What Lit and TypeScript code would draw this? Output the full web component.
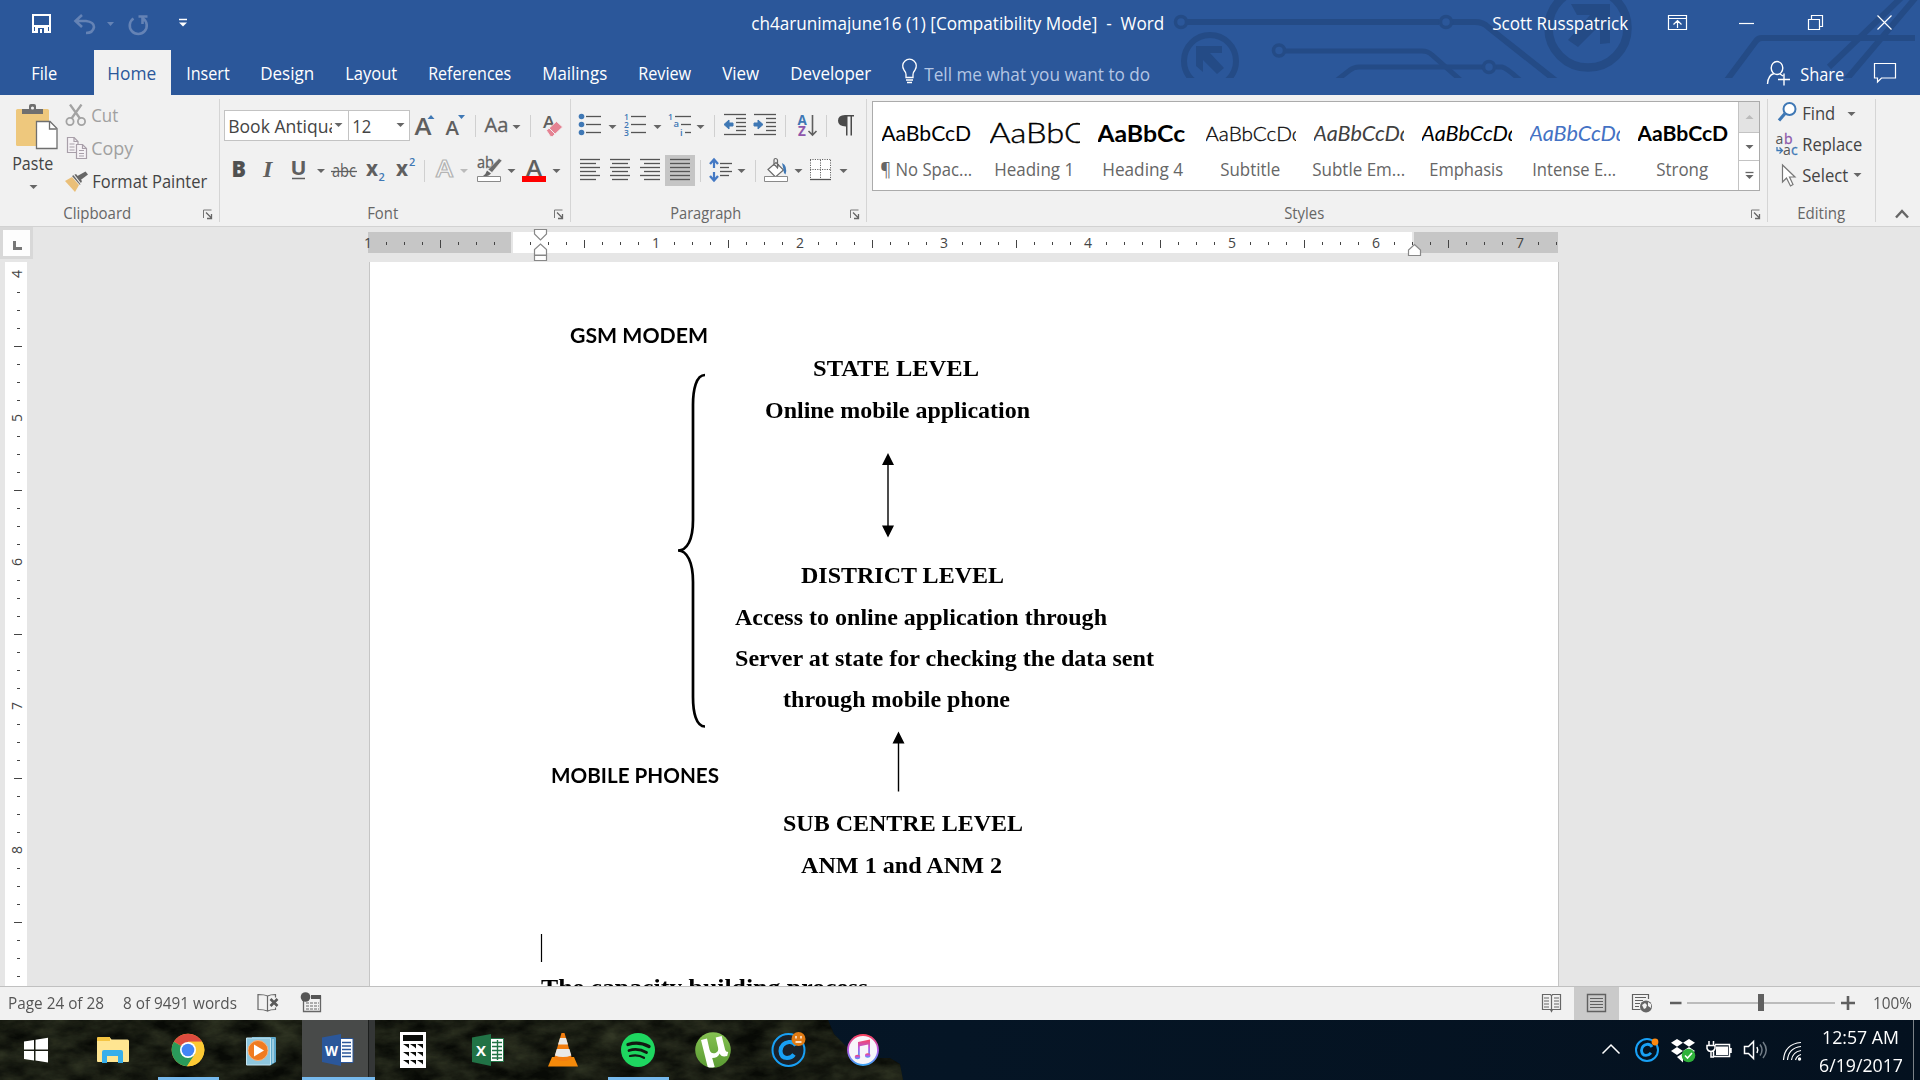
import { LitElement, html, svg, css } from "lit";
import { customElement, property, query } from "lit/decorators.js";

/** A line of text fitted to a given advance width. */
@customElement("ui-text")
class UiText extends LitElement {
  @property() text = "";
  @property({ type: Number }) w = 0;
  @query("span") span!: HTMLSpanElement;
  static styles = css`
    :host { display: inline-block; white-space: pre; flex: none; }
    span { display: inline-block; transform-origin: 0 50%; }
  `;
  render() {
    return html`<span>${this.text}</span>`;
  }
  updated() {
    this.span.style.transform = "none";
    const natural = this.span.getBoundingClientRect().width;
    if (natural && this.w) {
      this.style.width = `${this.w}px`;
      this.span.style.transform = `translateX(var(--nudge, 0px)) scaleX(${this.w / natural})`;
    }
  }
}

const t = (text: string, w: number, cls = "") => html`<ui-text class=${cls} .text=${text} .w=${w}></ui-text>`;

/** An icon cell whose drawing uses window coordinates. */
const cell = (x: number, y: number, w: number, h: number, body: unknown) =>
  html`<svg class="cell" width=${w} height=${h} viewBox="${x} ${y} ${w} ${h}">${body}</svg>`;

const r1 = (x: number, end: number, body: unknown) => cell(x, 104, end - x, 42, body);
const r2 = (x: number, end: number, body: unknown) => cell(x, 150, end - x, 42, body);

const caret = (x: number, y: number, fill = "#666") => svg`<path d="M${x} ${y}h8l-4 4z" fill=${fill} />`;
const sep = (x: number, y: number) => svg`<path d="M${x + 0.5} ${y}v22" stroke="#d0d0d0" />`;
const lines = (rows: number[][], stroke = "#555") =>
  rows.map(([x, y, w]) => svg`<path d="M${x} ${y + 0.5}h${w}" stroke=${stroke} stroke-width="1.3" />`);

const G = "#5f5f5f";
const B = "#3f78b5";

const TABS: [string, number][] = [
  ["Insert", 43.5], ["Design", 54], ["Layout", 52], ["References", 83],
  ["Mailings", 65], ["Review", 53], ["View", 37], ["Developer", 81],
];

const STYLES: [string, number, string, string, number][] = [
  ["AaBbCcD", 90, "s-normal", "¶ No Spac...", 92],
  ["AaBbCc", 112, "s-h1", "Heading 1", 80],
  ["AaBbCc", 88, "s-h4", "Heading 4", 81],
  ["AaBbCcDd", 98, "s-sub", "Subtitle", 60],
  ["AaBbCcDd", 98, "s-subtle", "Subtle Em...", 93],
  ["AaBbCcDd", 98, "s-emph", "Emphasis", 74],
  ["AaBbCcDd", 98, "s-intense", "Intense E...", 84],
  ["AaBbCcD", 91, "s-strong", "Strong", 52],
];

const DOC: [string, number, number][] = [
  ["STATE LEVEL", 443, 166],
  ["Online mobile application", 395, 265],
  ["", 0, 0], ["", 0, 0], ["", 0, 0],
  ["DISTRICT LEVEL", 431, 203],
  ["Access to online application through", 365, 372],
  ["Server at state for checking the data sent", 364.5, 419],
  ["through mobile phone", 413, 227],
  ["", 0, 0], ["", 0, 0],
  ["SUB CENTRE LEVEL", 413, 240],
  ["ANM 1 and ANM 2", 431, 201],
  ["", 0, 0], ["", 0, 0],
  ["The capacity building process", 171, 327],
];

@customElement("app-root")
class AppRoot extends LitElement {
  static styles = css`
    :host {
      display: flex; flex-direction: column; width: 1920px; height: 1080px; overflow: hidden;
      font-family: "Open Sans", "Noto Sans", sans-serif; font-size: 17.5px; color: #444; background: #e6e6e6;
    }
    * { box-sizing: border-box; }
    svg { display: block; flex: none; }
    svg text { font-family: "Open Sans", "Noto Sans", sans-serif; }
    .head { --nudge: -0.8px; position: relative; height: 95px; background: #2b579a; color: #fff; flex: none; }
    .decor { position: absolute; left: 0; top: 0; }
    .title { position: relative; display: grid; grid-template-columns: 752px 413px 328px 136px 1fr; height: 50px; align-items: center; }
    .title ui-text { line-height: 47px; height: 50px; }
    .tabs { position: relative; display: flex; height: 45px; line-height: 45px; font-size: 18.5px; }
    .tab { padding: 0 15.5px; }
    .tab.file { width: 94px; padding-left: 32px; flex: none; }
    .tab.home { width: 77px; padding: 0 0 0 14px; background: #f1f1f1; color: #2b579a; flex: none; }
    .tell { color: #b4c6e4; padding-top: 1px; }
    .share { padding-top: 1px; margin-right: 14px; }
    .grow { flex: 1; }
    .ribbon { --nudge: -0.8px; display: flex; height: 132px; background: #f1f1f1; border-bottom: 1px solid #d2d2d2; flex: none; }
    .group { display: flex; flex-direction: column; position: relative; border-right: 1px solid #d5d5d5; height: 123px; margin-top: 4px; padding-top: 5px; flex: none; }
    .g-clip { width: 220px; } .g-font { width: 351px; } .g-para { width: 296px; } .g-styles { width: 901px; } .g-edit { width: 108px; }
    .row { display: flex; height: 42px; }
    .row + .row { margin-top: 4px; }
    .label { display: flex; align-items: flex-start; height: 28px; margin-top: auto; margin-bottom: -2px; font-size: 16px; color: #666; }
    .label > div { flex: 1; text-align: center; line-height: 34px; }
    .clip { display: flex; height: 90px; }
    .paste { width: 62px; display: flex; flex-direction: column; align-items: flex-start; }
    .paste ui-text { margin-left: 12.5px; line-height: 22px; }
    .acts { display: flex; flex-direction: column; }
    .act { display: flex; height: 33px; line-height: 22px; }
    .off { color: #a0a0a0; }
    .combo { display: flex; height: 31px; margin-top: 6px; background: #fff; border: 1px solid #c3c3c3; line-height: 30px; overflow: hidden; font-size: 18px; }
    .c-font { width: 125px; margin-left: 4px; padding-left: 4px; }
    .c-size { width: 62px; padding-left: 4px; border-left: 1px solid #c3c3c3; margin-left: -1px; }
    .clipped { width: 103px; overflow: hidden; flex: none; }
    .gallery { display: flex; width: 888px; height: 90px; margin: -3px 0 0 5px; background: #fff; border: 1px solid #ababab; flex: none; }
    .style { width: 108px; padding-left: 9px; display: flex; flex-direction: column; flex: none; }
    .sample { width: 90px; height: 55px; overflow: hidden; color: #000; font-family: Lato, sans-serif; font-size: 20.5px; line-height: 62px; }
    .s-h1 { font-size: 28px; line-height: 60px; font-weight: 300; -webkit-text-stroke: 0.4px #000; }
    .s-h4 { font-weight: 700; font-size: 23.5px; }
    .s-sub { font-weight: 300; -webkit-text-stroke: 0.3px #111; }
    .s-subtle { font-style: italic; color: #404040; }
    .s-emph { font-style: italic; }
    .s-intense { font-style: italic; color: #4472c4; }
    .s-strong { font-weight: 700; }
    .sname { width: 90px; display: flex; justify-content: center; color: #666; line-height: 25px; font-size: 18px; }
    .scroll { margin-left: auto; }
    .edit { display: flex; flex-direction: column; padding-left: 6px; margin-top: -3px; }
    .erow { display: flex; height: 31px; line-height: 25px; }
    .work { display: flex; flex: none; height: 759px; }
    .side { width: 369px; flex: none; }
    .main { width: 1551px; display: flex; flex-direction: column; }
    .hruler { margin-left: -9px; }
    .page { position: relative; width: 1190px; height: 724px; background: #fff; border-left: 1px solid #c6c6c6; border-right: 1px solid #c6c6c6; overflow: hidden; padding-top: 86.2px; font-family: "Liberation Serif", serif; font-weight: 700; font-size: 24px; color: #000; flex: none; }
    .line { height: 41.4px; line-height: 41.4px; white-space: pre; display: flex; }
    .line:nth-child(16) { margin-top: -2.5px; }
    .indent { flex: none; }
    .shapes { position: absolute; left: 0; top: 0; }
    .box { position: absolute; font-family: Lato, sans-serif; font-size: 20.5px; line-height: 24px; }
    .gsm { left: 200px; top: 61px; }
    .phones { left: 181px; top: 501px; }
    .status { display: flex; height: 34px; background: #f1f1f1; border-top: 1px solid #c0c0c0; font-size: 15.5px; line-height: 33px; color: #555; padding-left: 8px; flex: none; }
    .status .words { margin-left: 19px; }
    .task { position: relative; height: 60px; background: #0a0d09; color: #fff; display: flex; flex: none; }
    .photo { position: absolute; left: 0; top: 0; }
    .apps { position: relative; }
    .traylayer { position: relative; margin-left: auto; }
    .clock { position: relative; width: 102px; display: flex; flex-direction: column; align-items: center; padding-top: 4px; line-height: 27.5px; font-size: 17.5px; padding-right: 3px; }
    .peek { position: relative; width: 7px; border-left: 1px solid #7b8288; }
  `;

  private decor() {
    return html`<svg class="decor" width="1920" height="78" viewBox="0 0 1920 78">
      <g fill="none" stroke="#244b86" stroke-width="5">
        <circle cx="1181" cy="22" r="5.5" stroke-width="3.5" />
        <path d="M1187 22H1439M1452 22H1475Q1483 22 1488 27L1560 84" stroke-width="6" />
        <circle cx="1446" cy="22" r="5.5" stroke-width="3.5" />
        <circle cx="1210" cy="61" r="26" stroke-width="6" />
        <circle cx="1279" cy="50.5" r="5.5" stroke-width="3.5" />
        <path d="M1285 51H1422Q1428 51 1432 55L1465 84" />
        <path d="M1332 84L1350 70Q1354 67 1359 67H1483M1496 67H1502Q1507 68 1522 82" />
        <circle cx="1489" cy="67" r="5.5" stroke-width="3.5" />
        <circle cx="1588" cy="28" r="39.5" stroke-width="8.5" />
        <path d="M1724 84L1756 41Q1758 38 1762 38H1915" stroke-width="6" />
        <path d="M1829 67L1903 -4M1846 80L1917 -4" stroke-width="6" />
      </g>
      <path d="M1196 46H1222V53H1210L1224 68 1217 74 1203 60V72L1196 66Z" fill="#244b86" />
      <path d="M1571 4H1610V43L1600 44V25L1578 47 1568 40 1590 15H1577Z" fill="#244b86" />
    </svg>`;
  }

  private head() {
    return html`<div class="head">
      ${this.decor()}
      <div class="title">
        ${cell(0, 0, 752, 50, svg`
          <path d="M33 15h17v17h-17zM33 26h17" fill="none" stroke="#fff" stroke-width="2" />
          <path d="M35 26h13v7h-13z" fill="#fff" /><path d="M38 28h6v5h-2v-4h-2v4h-2z" fill="#2b579a" />
          <g fill="none" stroke="#6583b5" stroke-width="2.6"><path d="M76 21H86Q94 22 94 27Q93 33 86 33M82 15L75.500 21 82 27" />
          <path d="M133.500 18.500A8.500 8.500 0 1 0 143 18.500M138.500 16.500H147.500M142.500 16V24" /></g>
          <path d="M107 22h7l-3.500 4z" fill="#6583b5" />
          <path d="M179 19.500h8" stroke="#fff" stroke-width="1.500" /><path d="M179 22.500h8l-4 4z" fill="#fff" />`)}
        ${t("ch4arunimajune16 (1) [Compatibility Mode]  -  Word", 413)}
        <div></div>
        ${t("Scott Russpatrick", 136)}
        ${cell(1629, 0, 291, 50, svg`<g fill="none" stroke="#fff" stroke-width="1.2">
          <path d="M1668.500 15.500h18v14h-18zM1668.500 18.500h18M1677.500 28v-7M1673.500 24.500l4-4 4 4" />
          <path d="M1739 23.500h15" /><path d="M1808.500 19.500h11v10h-11zM1811.500 19v-3.500h11v11h-3" />
          <path d="M1877.500 15.500l14 14M1891.500 15.500l-14 14" /></g>`)}
      </div>
      <div class="tabs">
        <div class="tab file">${t("File", 26)}</div>
        <div class="tab home">${t("Home", 49)}</div>
        ${TABS.map(([n, w]) => html`<div class="tab">${t(n, w)}</div>`)}
        ${cell(888, 50, 37, 45, svg`<path d="M906 77.500v-3q0-2-2-4.500a6.800 6.800 0 1 1 11 0q-2 2.500-2 4.500v3z" fill="none" stroke="#fff" stroke-width="1.300" /><path d="M906 80h7M907 82.500h5" stroke="#fff" stroke-width="1.500" />`)}
        ${t("Tell me what you want to do", 226, "tell")}
        <div class="grow"></div>
        ${cell(1760, 50, 41, 45, svg`<g fill="none" stroke="#fff" stroke-width="1.400"><ellipse cx="1777" cy="68" rx="5.800" ry="6.500" /><path d="M1767.500 84Q1768 75 1774 73.500M1780 74L1783 76M1778 79.500h12M1784 73.500v12" /></g>`)}
        ${t("Share", 44, "share")}
        ${cell(1859, 50, 61, 45, svg`<path d="M1874.500 63.500h21v14.500h-14l-4 4v-4h-3z" fill="none" stroke="#fff" stroke-width="1.200" />`)}
      </div>
    </div>`;
  }

  private launcher(x: number) {
    return cell(x, 196, 24, 28, svg`<path d="M${x + 8.5} 218v-8h8" fill="none" stroke="#777" /><path d="M${x + 11} 212.500l5 5M${x + 16.5} 214v4.500h-4.500" fill="none" stroke="#666" stroke-width="1.300" />`);
  }

  private clipboard() {
    return html`<div class="group g-clip">
      <div class="clip">
        <div class="paste">
          ${cell(0, 104, 62, 48, svg`<rect x="16" y="109" width="33" height="37" rx="1.500" fill="#eec87d" />
            <path d="M22 114v-5h7v-3q0-2 2-2h3q2 0 2 2v3h7v5z" fill="#6f6f6f" /><circle cx="32.500" cy="108" r="1.600" fill="#f1f1f1" />
            <path d="M36.500 121.500h13.500l7 7v20h-20.500z" fill="#fff" stroke="#6f6f6f" stroke-width="1.300" /><path d="M49.500 121.500v7.500h7" fill="none" stroke="#6f6f6f" stroke-width="1.300" />`)}
          ${t("Paste", 41)}
          ${cell(0, 174, 62, 20, caret(29.5, 185))}
        </div>
        <div class="acts">
          <div class="act off">${cell(62, 104, 30, 33, svg`<g fill="none" stroke="#a3a3a3" stroke-width="1.800"><circle cx="70" cy="121.500" r="3.600" /><circle cx="81.500" cy="121.500" r="3.600" /><path d="M70 104.500L80 118.500M81.500 104.500L71.500 118.500" stroke-width="2.300" /></g>`)}${t("Cut", 27)}</div>
          <div class="act off">${cell(62, 137, 30, 33, svg`<g fill="#f5f2f5" stroke="#a89fa9" stroke-width="1.200"><path d="M67.500 137.500h6.500l4 4v11h-10.500z" /><path d="M76.500 144.500h6l4 4v10h-10z" /><path d="M74 137.500v4h4M82.500 144.500v4h4M69.500 144h5M69.500 147h5M69.500 150h5M79 150.500h5M79 153.500h5M79 156h5" fill="none" /></g>`)}${t("Copy", 42)}</div>
          <div class="act">${cell(62, 170, 31, 24, svg`<path d="M65 181l7-4 7 8-4 7z" fill="#eabf78" /><path d="M72 176l4-2 6 7-2 4z" fill="#666" /><path d="M76.500 176.500l9-5 2.500 3-8 6z" fill="#666" /><path d="M74 175l7 9" stroke="#f1f1f1" stroke-width="1.200" />`)}${t("Format Painter", 115)}</div>
        </div>
      </div>
      <div class="label"><div>${t("Clipboard", 68)}</div>${this.launcher(195)}</div>
    </div>`;
  }

  private font() {
    return html`<div class="group g-font">
      <div class="row">
        <div class="combo c-font"><div class="clipped">${t("Book Antiqua", 110)}</div>${cell(332, 111, 15, 29, caret(334.500, 123))}</div>
        <div class="combo c-size">${t("12", 19)}${cell(372, 111, 37, 29, caret(396.500, 123))}</div>
        ${r1(410, 440, svg`<text x="414.500" y="135" font-size="23" font-weight="600" fill=${G} textLength="17" lengthAdjust="spacingAndGlyphs">A</text><path d="M427.500 119h7l-3.500-4z" fill=${B} />`)}
        ${r1(440, 470, svg`<text x="445.500" y="135" font-size="19" font-weight="600" fill=${G} textLength="13.500" lengthAdjust="spacingAndGlyphs">A</text><path d="M458 115h7l-3.500 4z" fill=${B} />`)}
        ${r1(470, 478, sep(475, 115))}
        ${r1(478, 525, svg`<text x="484.500" y="132" font-size="20" fill=${G} textLength="24" lengthAdjust="spacingAndGlyphs" stroke=${G} stroke-width=".3">Aa</text>${caret(512.500, 125)}`)}
        ${r1(525, 536, sep(530, 115))}
        ${r1(536, 568, svg`<text x="543" y="128" font-size="17" font-weight="600" fill=${G} textLength="12" lengthAdjust="spacingAndGlyphs">A</text><path d="M546.500 130.500l10-9 6 5.500-10 9.500h-2z" fill="#e58393" stroke="#f1f1f1" stroke-width=".8" /><path d="M549 128l6 6" stroke="#f1f1f1" />`)}
      </div>
      <div class="row">
        ${r2(220, 255, svg`<text x="231.500" y="177" font-size="22" font-weight="800" fill="#505050" textLength="14.500" lengthAdjust="spacingAndGlyphs">B</text>`)}
        ${r2(255, 284, svg`<text x="263" y="177" font-size="24" font-weight="700" font-style="italic" fill=${G} style="font-family:'Liberation Serif'">I</text>`)}
        ${r2(284, 328, svg`<text x="290.500" y="175" font-size="20" font-weight="700" fill=${G} textLength="16" lengthAdjust="spacingAndGlyphs">U</text><path d="M292 178.500h13" stroke=${G} stroke-width="1.500" />${caret(317, 169)}`)}
        ${r2(328, 362, svg`<text x="332" y="177" font-size="17.500" fill=${G} textLength="24" lengthAdjust="spacingAndGlyphs">abc</text><path d="M331 171.500h26" stroke=${G} stroke-width="1.300" />`)}
        ${r2(362, 392, svg`<text x="366" y="176" font-size="22" font-weight="700" fill=${G} textLength="12" lengthAdjust="spacingAndGlyphs">x</text><text x="378.500" y="181" font-size="11" font-weight="600" fill=${B}>2</text>`)}
        ${r2(392, 420, svg`<text x="396" y="176" font-size="22" font-weight="700" fill=${G} textLength="12" lengthAdjust="spacingAndGlyphs">x</text><text x="409" y="166" font-size="11" font-weight="600" fill=${B}>2</text>`)}
        ${r2(420, 430, sep(424, 160))}
        ${r2(430, 472, svg`<text x="436" y="177" font-size="23" font-weight="600" fill="#fafafa" stroke="#b4b4b4" stroke-width="1.200" textLength="17" lengthAdjust="spacingAndGlyphs">A</text>${caret(460, 169, "#bbb")}`)}
        ${r2(472, 520, svg`<text x="477" y="168" font-size="15.500" fill=${G} textLength="17" lengthAdjust="spacingAndGlyphs" stroke=${G} stroke-width=".3">ab</text><path d="M499 158.500l3 2-10 12-4-3z" fill="#6c6c6c" stroke="#f1f1f1" stroke-width=".6" /><path d="M487 170.500l4 3q-2 3-8 2.500q3-2 4-5.500z" fill="#666" /><path d="M477.500 176.500h23v5h-23z" fill="#fff" stroke="#8a8a8a" />${caret(507.500, 169)}`)}
        ${r2(520, 568, svg`<text x="526" y="175.500" font-size="22" font-weight="600" fill=${G} textLength="16" lengthAdjust="spacingAndGlyphs">A</text><path d="M522 176h24v6h-24z" fill="#f00" />${caret(552.500, 169)}`)}
      </div>
      <div class="label"><div>${t("Font", 31)}</div>${this.launcher(546)}</div>
    </div>`;
  }

  private paragraph() {
    const ys = [159, 163, 167, 171, 175, 179];
    const align = (x: number, off: number) => lines(ys.map((y, i) => [i % 2 ? x + off : x, y, i % 2 ? 16 : 20]));
    return html`<div class="group g-para">
      <div class="row">
        ${r1(571, 620, svg`${[116.5, 124.5, 132.5].map((y) => svg`<circle cx="581.500" cy=${y} r="2.800" fill=${B} />`)}${lines([[586, 116, 15], [586, 124, 15], [586, 132, 15]])}${caret(608.500, 125)}`)}
        ${r1(620, 664, svg`${["1", "2", "3"].map((n, i) => svg`<text x="624" y=${119.500 + i * 8} font-size="8.500" font-weight="600" fill=${B}>${n}</text>`)}${lines([[631, 116, 15], [631, 124, 15], [631, 132, 15]])}${caret(653.500, 125)}`)}
        ${r1(664, 710, svg`<text x="668" y="120" font-size="8.500" font-weight="600" fill=${B}>1</text><text x="673.500" y="127" font-size="9.500" font-weight="600" fill=${B}>a</text><text x="680" y="136" font-size="9.500" font-weight="600" fill=${B}>i</text>${lines([[675, 116, 16], [681, 124, 10], [685, 132, 6]])}${caret(696.500, 125)}`)}
        ${r1(710, 718, sep(714, 115))}
        ${r1(718, 750, svg`${lines([[724, 114, 22], [736, 118, 10], [736, 122, 10], [736, 126, 10], [736, 130, 10], [724, 134, 22]])}<path d="M724 124.500l5-4.500v3h4v3h-4v3z" fill=${B} stroke=${B} />`)}
        ${r1(750, 782, svg`${lines([[754, 114, 22], [766, 118, 10], [766, 122, 10], [766, 126, 10], [766, 130, 10], [754, 134, 22]])}<path d="M763 124.500l-5-4.500v3h-4v3h4v3z" fill=${B} stroke=${B} />`)}
        ${r1(782, 792, sep(785, 115))}
        ${r1(792, 822, svg`<text x="797.500" y="124.500" font-size="13.500" font-weight="700" fill=${B}>A</text><text x="798" y="136" font-size="13.500" font-weight="700" fill="#8e57ab">Z</text><path d="M812.500 115v20M808.500 131l4 4 4-4" fill="none" stroke=${G} stroke-width="1.600" />`)}
        ${r1(822, 832, sep(826, 115))}
        ${r1(832, 864, svg`<path d="M845 115h9v1.500h-2v19h-1.500v-19h-3v19H846v-9q-8 0-8-5.700T845 115z" fill="#4a4a4a" />`)}
      </div>
      <div class="row">
        ${r2(571, 605, align(580, 0))}
        ${r2(605, 635, align(610, 2))}
        ${r2(635, 665, align(640, 4))}
        ${r2(665, 695, svg`<path d="M665 155h30v31h-30z" fill="#c5c5c5" />${lines(ys.map((y) => [670, y, 20]))}`)}
        ${r2(695, 705, sep(700, 160))}
        ${r2(705, 750, svg`<path d="M714 159v9M714 172v9" stroke="#4479c4" stroke-width="2.200" /><path d="M710 164l4-4.500 4 4.500M710 176l4 4.500 4-4.500" fill="none" stroke="#4479c4" stroke-width="2.400" />${lines([[720, 163, 12], [720, 167, 9], [720, 171, 12], [720, 175, 9]])}${caret(737.500, 169)}`)}
        ${r2(750, 760, sep(755, 160))}
        ${r2(760, 806, svg`<path d="M768 169.500l8-7 7.500 7.500-8 7z" fill="#fff" stroke="#6a6a6a" stroke-width="1.200" /><path d="M774 166v-6q0-1.500 1.500-1.500t2 1.500v6M775 165l2.500 3 1-4" fill="none" stroke="#6a6a6a" stroke-width="1.200" /><path d="M782 163q6 3 3.500 11.500q-2-1-2-5z" fill=${B} /><path d="M764.500 176.500h23v5h-23z" fill="#fff" stroke="#8a8a8a" />${caret(794.500, 169)}`)}
        ${r2(806, 850, svg`<path d="M810 159h21v21h-21z" fill="#fff" /><path d="M810 159.500h21M810 169.500h21M810.500 160v19M820.500 160v19M830.500 160v19" stroke="#666" stroke-dasharray="1.200 1.200" fill="none" /><path d="M810 179.500h21" stroke="#555" stroke-width="1.300" />${caret(839.500, 169)}`)}
      </div>
      <div class="label"><div>${t("Paragraph", 71)}</div>${this.launcher(842)}</div>
    </div>`;
  }

  private gallery() {
    return html`<div class="group g-styles">
      <div class="gallery">
        ${STYLES.map(([s, w, c, n, nw]) => html`<div class="style"><div class="sample ${c}">${t(s, w)}</div><div class="sname">${t(n, nw)}</div></div>`)}
        <div class="scroll">${cell(1738, 102, 21, 88, svg`<path d="M1738 101h22v31h-22z" fill="#e3e3e3" /><path d="M1738.500 100v92M1738 132.500h22M1738 160.500h22" stroke="#c3c3c3" /><path d="M1745.500 119h8l-4-4z" fill="#bbb" />${caret(1745.500, 145)}<path d="M1745.500 172.500h8" stroke="#666" stroke-width="1.300" />${caret(1745.500, 175)}`)}</div>
      </div>
      <div class="label"><div>${t("Styles", 40)}</div>${this.launcher(1743)}</div>
    </div>`;
  }

  private editing() {
    return html`<div class="group g-edit">
      <div class="edit">
        <div class="erow">${cell(1774, 101, 29, 27, svg`<circle cx="1789.500" cy="109" r="6" fill="#fff" stroke=${B} stroke-width="2" /><path d="M1785 113.500l-6 7" stroke=${B} stroke-width="3.200" />`)}${t("Find", 33)}${cell(1836, 101, 30, 27, caret(1847.5, 112))}</div>
        <div class="erow">${cell(1774, 132, 29, 27, svg`<text x="1775.500" y="144" font-size="14" fill="#555">a</text><text x="1784" y="144" font-size="14" fill="#8e57ab" stroke="#8e57ab" stroke-width=".3">b</text><text x="1783" y="154.500" font-size="14" fill="#555">a</text><text x="1791" y="154.500" font-size="14" fill=${B} stroke=${B} stroke-width=".3">c</text><path d="M1777 147v3.500h5M1779.500 147.500l3 3-3 3" fill="none" stroke=${B} stroke-width="1.300" />`)}${t("Replace", 60)}</div>
        <div class="erow">${cell(1774, 163, 29, 27, svg`<path d="M1782.500 165v17l4-4 4 8 2.500-1.500-3.500-7.500h5.500z" fill="#fff" stroke="#777" stroke-width="1.200" />`)}${t("Select", 46)}${cell(1849, 163, 20, 27, caret(1853.500, 173))}</div>
      </div>
      <div class="label"><div>${t("Editing", 48)}</div></div>
    </div>`;
  }

  private hruler() {
    const marks = [];
    for (let i = -8; i <= 58; i++) {
      const x = 512 + i * 18;
      if (i === 0) continue;
      if (i % 8 === 0) marks.push(svg`<text x=${x} y="248" font-size="14" fill="#444" text-anchor="middle">${Math.abs(i / 8)}</text>`);
      else if (i % 4 === 0) marks.push(svg`<path d="M${x + 0.5} 240v8" stroke="#444" />`);
      else marks.push(svg`<path d="M${x + 0.5} 242v3" stroke="#444" />`);
    }
    return html`<svg class="hruler" width="1210" height="35" viewBox="360 227 1210 35">
      <path d="M368 232h1190v21h-1190z" fill="#c6c6c6" /><path d="M511 232h2v21h-2zM1412 232h2v21h-2z" fill="#e6e6e6" /><path d="M513 232h899v21h-899z" fill="#fff" />
      ${marks}
      <g fill="#fff" stroke="#888" stroke-width="1.200"><path d="M534.500 229.500h12v4.500l-6 6-6-6z" /><path d="M534.500 255v-5.500l6-5.500 6 5.500v5.500z" /><path d="M534.500 255.500h12v5h-12z" />
      <path d="M1408.500 255.500v-5.500l6-5.500 6 5.500v5.500z" /></g>
    </svg>`;
  }

  private vruler() {
    const marks = [];
    for (let i = 0; i < 40; i++) {
      const y = 274 + i * 18;
      if (i % 8 === 0) marks.push(svg`<text x="0" y="0" transform="translate(22 ${y}) rotate(-90)" font-size="14" fill="#444" text-anchor="middle">${4 + i / 8}</text>`);
      else if (i % 4 === 0) marks.push(svg`<path d="M14 ${y + 0.5}h8" stroke="#444" />`);
      else marks.push(svg`<path d="M17 ${y + 0.5}h3" stroke="#444" />`);
    }
    return html`<svg width="369" height="759" viewBox="0 227 369 759">
      <path d="M0 227h33v32h-33z" fill="#d8d8d8" /><path d="M3 230h27v26h-27z" fill="#fdfdfd" /><path d="M14.500 241v7.500h7.500" fill="none" stroke="#777" stroke-width="3" />
      <path d="M5 262h22v724h-22z" fill="#fff" />${marks}
    </svg>`;
  }

  private page() {
    return html`<div class="page">
      ${DOC.map(([s, x, w]) => html`<div class="line">${s ? html`<div class="indent" style="width:${x}px"></div>${t(s, w)}` : ""}</div>`)}
      <svg class="shapes" width="1188" height="724" viewBox="370 262 1188 724">
        <path d="M705 375C696 375 693 390 693 405V520C693 540 687 550.500 678 550.500C687 550.500 693 562 693 582V697C693 712 696 726.500 705 726.500" fill="none" stroke="#000" stroke-width="2.700" />
        <path d="M888 460v70M898.500 740v51.500" stroke="#000" stroke-width="1.400" />
        <path d="M888 453l6 12h-12zM888 537.500l6-12h-12zM898.500 731.500l6 12h-12z" />
        <path d="M541.500 934v28" stroke="#000" stroke-width="1.200" />
      </svg>
      <div class="box gsm">${t("GSM MODEM", 138)}</div>
      <div class="box phones">${t("MOBILE PHONES", 168)}</div>
    </div>`;
  }

  private status() {
    return html`<div class="status">
      ${t("Page 24 of 28", 96)}${t("8 of 9491 words", 114, "words")}
      ${cell(237, 987, 100, 33, svg`<g fill="none" stroke="#666" stroke-width="1.200"><path d="M267.500 996q-3-1.500-9.500-1.500v15q6 0 9.500 1.500zM267.500 996q3-1.500 8-1.500v3M267.500 1011q3-1.500 8-1.500v-2" /></g><path d="M270.500 999l7 7M277.500 999l-7 7" stroke="#5a5a5a" stroke-width="2.600" />
        <path d="M303.500 999v12.500h17v-16" fill="none" stroke="#666" stroke-width="1.300" /><circle cx="305.500" cy="997" r="4.800" fill="#555" /><path d="M311 995h10v4h-10z" fill="#555" /><path d="M306 1003h13M306 1006h13M306 1009h13" stroke="#666" stroke-dasharray="3 1" />`)}
      <div class="grow"></div>
      ${cell(1530, 987, 343, 33, svg`<g fill="none" stroke="#666" stroke-width="1.200">
        <path d="M1542.500 994.500h8l1 1.500 1-1.500h8v15h-8l-1 2-1-2h-8zM1551.500 996v15" /><path d="M1544 998h5M1544 1001h5M1544 1004h5M1544 1007h5M1554 998h5M1554 1001h5M1554 1004h5M1554 1007h5" /></g>
        <path d="M1574 987h45v33h-45z" fill="#cacaca" />
        <g fill="none" stroke="#606060" stroke-width="1.200"><path d="M1587.500 994.500h18v17h-18z" stroke-width="1.400" /><path d="M1590 998.500h13M1590 1001.500h13M1590 1004.500h13M1590 1007.500h13" />
        <path d="M1648.500 999v-4.500h-16v15h8M1635 997.500h11M1635 1000.500h8M1635 1003.500h5M1635 1006.500h4" /></g>
        <circle cx="1646" cy="1006.500" r="6" fill="#666" /><path d="M1642 1005l3-2 2 2-1 3-2 1zM1648 1002l3 2v4l-3-2z" fill="#f1f1f1" />
        <path d="M1670 1003h11.500M1841 1003h14M1848 996v14" stroke="#5f5f5f" stroke-width="2.600" /><path d="M1687 1003h148" stroke="#aaa" stroke-width="1.600" /><path d="M1758 994h6v17h-6z" fill="#606060" />`)}
      ${t("100%", 39)}<div style="width:8px"></div>
    </div>`;
  }

  private task() {
    return html`<div class="task">
      <svg class="photo" width="1920" height="60" viewBox="0 1020 1920 60">
        <defs><linearGradient id="sea" x1="0" x2="1"><stop offset="0" stop-color="#061728" /><stop offset=".5" stop-color="#051525" /><stop offset="1" stop-color="#04111f" /></linearGradient>
        <filter id="grain" x="0" y="0" width="100%" height="100%"><feTurbulence type="fractalNoise" baseFrequency=".03 .06" numOctaves="5" seed="4" /><feColorMatrix values="0 0 0 0 .11  0 0 0 0 .13  0 0 0 0 .06  1.200 0 0 0 -.25" /></filter>
        <clipPath id="land"><path d="M0 1020H828L834 1034 846 1046 862 1058 890 1058 900 1064 903 1080H0Z" /></clipPath></defs>
        <path d="M0 1020h1920v60h-1920z" fill="url(#sea)" />
        <g clip-path="url(#land)"><path d="M0 1020h910v60h-910z" fill="#080a06" /><rect x="0" y="1020" width="910" height="60" filter="url(#grain)" opacity=".6" /></g>
      </svg>
      <svg class="apps" width="900" height="60" viewBox="0 1020 900 60">
        <defs><linearGradient id="it" x1="0" y1="0" x2="0" y2="1"><stop offset="0" stop-color="#f8435f" /><stop offset=".5" stop-color="#b45ae8" /><stop offset="1" stop-color="#3ea6f5" /></linearGradient>
        <linearGradient id="ut" x1="0" y1="0" x2="0" y2="1"><stop offset="0" stop-color="#85c252" /><stop offset="1" stop-color="#5a9a32" /></linearGradient></defs>
        <path d="M302 1020h67v60h-67z" fill="#484a49" /><path d="M369 1020h6v60h-6z" fill="#343636" /><path d="M368.500 1020v57" stroke="#1c1e1d" />
        <path d="M158 1077h61v3h-61zM302 1077h73v3h-73zM608 1077h61v3h-61z" fill="#76b9ed" />
        <path d="M24 1041.500l10-1.500v9.500h-10zM35.500 1039.800l12.500-2v11.700h-12.500zM24 1051h10v9.500l-10-1.500zM35.500 1051h12.500v11.500l-12.500-2z" fill="#fff" />
        <path d="M97 1038.500q0-1.500 1.500-1.500h11l2 2.500h16q1.500 0 1.500 1.500v20q0 1-1 1h-30q-1 0-1-1z" fill="#ffe591" /><path d="M98 1037h12v4h-13v-3z" fill="#f5c542" /><path d="M102 1063v-11q0-2 2-2h17q2 0 2 2v11h-5v-7h-11v7z" fill="#37aeea" />
        <circle cx="188" cy="1050" r="16.300" fill="#fcc934" /><path d="M188 1050L173.900 1041.800A16.300 16.300 0 0 1 202.100 1041.800H188z" fill="#dd4b3e" /><path d="M188 1050L173.900 1041.800A16.300 16.300 0 0 0 187 1066.300L195 1054z" fill="#2a9a5a" /><path d="M188 1041.800h14.100a16.300 16.300 0 0 1-15.100 24.500l8.100-12.300z" fill="#fcc934" /><circle cx="188" cy="1050" r="8" fill="#fff" /><circle cx="188" cy="1050" r="6.300" fill="#4285f4" />
        <path d="M252 1037h23q1 0 1 1v24l-5 3h-20z" fill="#5fa9cc" /><path d="M246.500 1038h24v27h-24z" fill="#8fc7de" stroke="#c4e5f2" /><path d="M273 1039v24" stroke="#d7eef7" /><circle cx="258" cy="1050.500" r="10" fill="#f07b21" stroke="#f8b27b" /><path d="M254 1044.500v12l10-6z" fill="#fff" />
        <path d="M340 1038.500h13v24h-13z" fill="#fff" stroke="#2b579a" /><path d="M342 1042.500h9M342 1046h9M342 1049.500h9M342 1053h9M342 1056.500h9" stroke="#2b579a" stroke-width="1.600" /><path d="M322 1037.500l19-3.500v32l-19-4z" fill="#2b579a" /><text x="325" y="1055.500" font-size="15" font-weight="700" fill="#fff" textLength="13" lengthAdjust="spacingAndGlyphs">W</text>
        <path d="M400 1032h26v36h-26z" fill="#fff" /><path d="M403 1035h20v6h-20z" fill="#0a0c09" />${[1044, 1052, 1060].map((y) => [403, 410, 417].map((x) => svg`<path d="M${x} ${y}h6v4.500l-1.500-1.500z" fill="#0a0c09" />`))}
        <path d="M490 1038.500h13.500v23h-13.500z" fill="#fff" stroke="#217346" /><path d="M492 1042.500h10M492 1046.500h10M492 1050.500h10M492 1054.500h10M492 1058h10M497.500 1040v20" stroke="#217346" stroke-width="1.400" /><path d="M472 1037.500l19-3.500v32l-19-4z" fill="#217346" /><text x="476" y="1055.500" font-size="15" font-weight="700" fill="#fff">X</text>
        <path d="M552 1057h22l4 9.500h-30z" fill="#f58a0a" /><path d="M561.500 1033h3l7.500 26q-9 4-18 0z" fill="#f37e10" /><path d="M560 1038h6l2 6.500h-10zM556.800 1049h12.600l2 6.500q-8.500 3-16.600 0z" fill="#e9e9e9" />
        <circle cx="638" cy="1050" r="17" fill="#1ed760" /><g fill="none" stroke="#121a12" stroke-linecap="round"><path d="M628 1044.500q11-3.500 21 2" stroke-width="3.400" /><path d="M629 1050.500q9-3 17.500 2" stroke-width="2.800" /><path d="M630 1056q8-2 14 1.800" stroke-width="2.200" /></g>
        <circle cx="713" cy="1050" r="17.800" fill="url(#ut)" /><path d="M701 1040l6-1.500 2.500 11q1.500 5 6 3.500 3.500-1.500 2.500-5.500l-2.300-10 6-1.500 3.500 14q.5 2 3 2l-1 4q-6 1.500-7.500-2.500-2 4.500-7.500 4.500l2.500 9q-4 1-7 0z" fill="#fff" />
        <circle cx="788.500" cy="1050" r="16" fill="#1a2129" stroke="#18a0f5" stroke-width="2" /><path d="M796 1045.500q-2.500-4-7-3.500-8 1-8.500 9 .5 7 6.500 7 4.500 0 7-3.500" fill="none" stroke="#18a0f5" stroke-width="4" /><circle cx="798.500" cy="1039" r="7" fill="#e07a14" /><path d="M796 1036v2.500M801 1036v2.500M795.500 1042h6" stroke="#fff" stroke-width="1.300" />
        <circle cx="863" cy="1050" r="15" fill="#f7f5fa" stroke="url(#it)" stroke-width="1.800" /><g fill="url(#it)"><path d="M858 1042l12-2.500v16.500h-1.800v-11.500l-8.400 1.800v11h-1.800z" /><ellipse cx="857.500" cy="1057" rx="2.700" ry="2.200" /><ellipse cx="867.700" cy="1055.500" rx="2.700" ry="2.200" /></g>
      </svg>
      <svg class="traylayer" width="210" height="60" viewBox="1600 1020 210 60">${this.tray()}</svg>
      <div class="clock">${t("12:57 AM", 77)}${t("6/19/2017", 84)}</div>
      <div class="peek"></div>
    </div>`;
  }

  private tray() {
    return svg`<g fill="none" stroke="#fff" stroke-width="1.500"><path d="M1601.500 1053.500l8.500-8.500 8.500 8.500" />
      <circle cx="1646" cy="1050" r="11" stroke="#18a0f5" stroke-width="2" /><path d="M1651 1047q-1.500-3-5-2.700-5 .7-5.500 6 .3 5 4.500 5 3 0 5-2.500" stroke="#18a0f5" stroke-width="2.800" />
      <path d="M1714 1044.500h14.500v12h-16v-5M1730 1048v5M1706 1045.500h8v3q-1 3-4 3t-4-3zM1708 1041v4M1712.500 1041v4M1710 1051v6h3" />
      <path d="M1743.500 1046.500h4l5-5v17l-5-5h-4zM1756 1047q1.500 3 0 6" /><path d="M1759 1044.500q4 5.500 0 11M1762 1042q6.500 8 0 16" stroke="#727d87" />
      <path d="M1782.500 1060q1-16 17.500-17.500M1786.500 1060q1-12 13.500-13.500M1790.500 1060q1-8 9.500-9.500M1794.500 1060q1-4 5.500-5.500" stroke-width="1.200" /></g>
      <circle cx="1654" cy="1042" r="3.400" fill="#ff8a12" /><circle cx="1798.500" cy="1059" r="1.700" fill="#fff" />
      <path d="M1676 1039l6 3.700-6 4-6-4zM1688 1039l6 3.700-6 4-6-4zM1676 1047l6 4-6 4-6-4zM1688 1047l6 4-6 4-6-4zM1676 1057l6-4v9.500z" fill="#fff" /><circle cx="1687.500" cy="1055.500" r="6.800" fill="#2fb13b" /><path d="M1684 1055.500l2.500 2.500 4.500-5" fill="none" stroke="#fff" stroke-width="1.600" />
      <path d="M1715 1046.500h12v8.500h-12z" fill="#fff" />`;
  }

  render() {
    return html`
      ${this.head()}
      <div class="ribbon">${this.clipboard()}${this.font()}${this.paragraph()}${this.gallery()}${this.editing()}
        ${cell(1876, 95, 44, 131, svg`<path d="M1896 217.500l6-6.500 6 6.500" fill="none" stroke="#666" stroke-width="2.400" />`)}
      </div>
      <div class="work">
        <div class="side">${this.vruler()}</div>
        <div class="main">${this.hruler()}${this.page()}</div>
      </div>
      ${this.status()}
      ${this.task()}
    `;
  }
}
